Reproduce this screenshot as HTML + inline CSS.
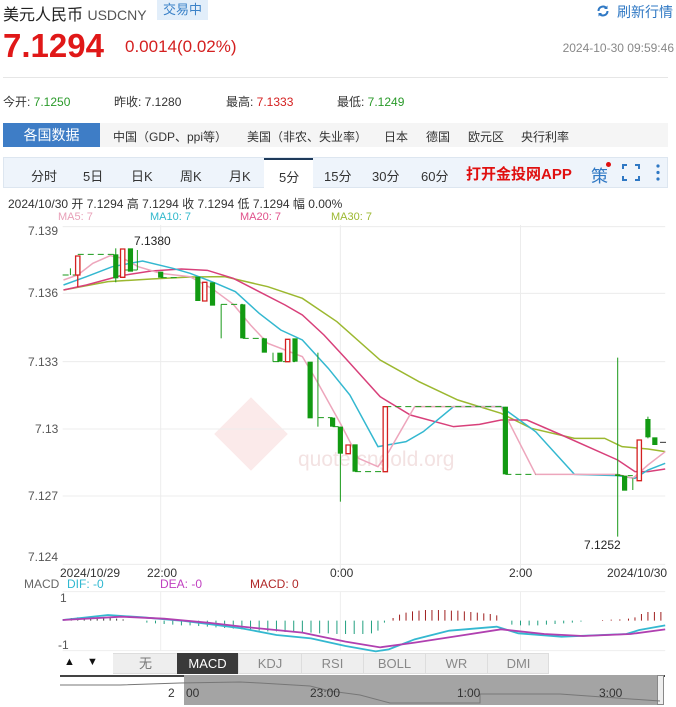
<!DOCTYPE html>
<html><head><meta charset="utf-8">
<style>
*{margin:0;padding:0;box-sizing:border-box}
body{width:676px;height:707px;background:#fff;position:relative;overflow:hidden;font-family:"Liberation Sans","Noto Sans CJK SC",sans-serif;color:#333}
.a{position:absolute;white-space:nowrap}
</style></head><body>
<div class="a" style="left:3px;top:1px;font-size:16px;color:#222">美元人民币 <span style="font-size:14px;color:#555">USDCNY</span></div>
<div class="a" style="left:157px;top:0;width:51px;height:20px;background:#e2eefa;color:#3b82c8;font-size:13px;text-align:center;line-height:20px">交易中</div>
<svg class="a" style="left:596px;top:4px" width="14" height="14" viewBox="0 0 14 14"><path d="M2.5 7a4.5 4.5 0 0 1 8-2.8M11.5 7a4.5 4.5 0 0 1-8 2.8" fill="none" stroke="#2f78c4" stroke-width="2"/><path d="M11.5 1.5v3.5H8zM2.5 12.5V9H6z" fill="#2f78c4"/></svg>
<div class="a" style="left:617px;top:2px;font-size:14px;color:#2f78c4">刷新行情</div>
<div class="a" style="left:3px;top:27px;font-size:33px;font-weight:bold;color:#e01818">7.1294</div>
<div class="a" style="left:125px;top:37px;font-size:17px;color:#d42020">0.0014(0.02%)</div>
<div class="a" style="right:2px;top:41px;font-size:12px;color:#888">2024-10-30 09:59:46</div>
<div class="a" style="left:3px;top:77px;width:665px;height:1px;background:#e6e6e6"></div>
<div class="a" style="left:3px;top:93px;font-size:12px;color:#333">今开: <span style="color:#2a9a2a">7.1250</span></div>
<div class="a" style="left:114px;top:93px;font-size:12px;color:#333">昨收: 7.1280</div>
<div class="a" style="left:226px;top:93px;font-size:12px;color:#333">最高: <span style="color:#d42020">7.1333</span></div>
<div class="a" style="left:337px;top:93px;font-size:12px;color:#333">最低: <span style="color:#2a9a2a">7.1249</span></div>
<div class="a" style="left:3px;top:123px;width:665px;height:24px;background:#f5f5f5"></div>
<div class="a" style="left:3px;top:123px;width:97px;height:24px;background:#3e7dc6;color:#fff;font-size:14px;text-align:center;line-height:24px">各国数据</div>
<div class="a" style="left:113px;top:128px;font-size:12px;color:#333">中国（GDP、ppi等）</div>
<div class="a" style="left:247px;top:128px;font-size:12px;color:#333">美国（非农、失业率）</div>
<div class="a" style="left:384px;top:128px;font-size:12px;color:#333">日本</div>
<div class="a" style="left:426px;top:128px;font-size:12px;color:#333">德国</div>
<div class="a" style="left:468px;top:128px;font-size:12px;color:#333">欧元区</div>
<div class="a" style="left:521px;top:128px;font-size:12px;color:#333">央行利率</div>
<div class="a" style="left:3px;top:157px;width:665px;height:31px;background:#eef4fb;border:1px solid #dde6f0"></div>
<div class="a" style="left:264px;top:158px;width:49px;height:30px;background:#fff;border-top:2px solid #1e3a5a"></div>
<div class="a" style="left:31px;top:166px;font-size:13px;color:#333;word-spacing:0">分时</div>
<div class="a" style="left:83px;top:166px;font-size:13px;color:#333">5日</div>
<div class="a" style="left:131px;top:166px;font-size:13px;color:#333">日K</div>
<div class="a" style="left:180px;top:166px;font-size:13px;color:#333">周K</div>
<div class="a" style="left:229px;top:166px;font-size:13px;color:#333">月K</div>
<div class="a" style="left:279px;top:167px;font-size:13px;color:#333">5分</div>
<div class="a" style="left:324px;top:166px;font-size:13px;color:#333">15分</div>
<div class="a" style="left:372px;top:166px;font-size:13px;color:#333">30分</div>
<div class="a" style="left:421px;top:166px;font-size:13px;color:#333">60分</div>
<div class="a" style="left:466px;top:163px;font-size:15px;font-weight:bold;color:#e01010">打开金投网APP</div>
<div class="a" style="left:591px;top:162px;font-size:17px;color:#2f78c4">策</div>
<div class="a" style="left:606px;top:162px;width:5px;height:5px;border-radius:50%;background:#e01010"></div>
<svg class="a" style="left:622px;top:164px" width="18" height="17" viewBox="0 0 18 17"><path d="M1 5V1h4M13 1h4v4M17 12v4h-4M5 16H1v-4" fill="none" stroke="#2f78c4" stroke-width="2"/></svg>
<svg class="a" style="left:655px;top:164px" width="6" height="17" viewBox="0 0 6 17"><circle cx="3" cy="2" r="1.6" fill="#2f78c4"/><circle cx="3" cy="8.5" r="1.6" fill="#2f78c4"/><circle cx="3" cy="15" r="1.6" fill="#2f78c4"/></svg>
<div class="a" style="left:8px;top:195px;font-size:12px;color:#333">2024/10/30 开 7.1294 高 7.1294 收 7.1294 低 7.1294 幅 0.00%</div>
<div class="a" style="left:58px;top:211px;font-size:11px;color:#e8a0b8">MA5: 7</div>
<div class="a" style="left:150px;top:211px;font-size:11px;color:#30b8cc">MA10: 7</div>
<div class="a" style="left:240px;top:211px;font-size:11px;color:#e0508a">MA20: 7</div>
<div class="a" style="left:331px;top:211px;font-size:11px;color:#9cb830">MA30: 7</div>
<div class="a" style="left:298px;top:448px;font-size:21px;color:#f3e2e2">quote.cngold.org</div>
<div class="a" style="left:225px;top:408px;width:52px;height:52px;transform:rotate(45deg);background:#fbeaea"></div>
<svg class="a" style="left:0;top:225px" width="676" height="345" viewBox="0 0 1565 1035" preserveAspectRatio="none">
<g stroke="#ececec" vector-effect="non-scaling-stroke" stroke-width="1">
<line x1="145" y1="5" x2="1540" y2="5" vector-effect="non-scaling-stroke"/><line x1="145" y1="205" x2="1540" y2="205" vector-effect="non-scaling-stroke"/><line x1="145" y1="410" x2="1540" y2="410" vector-effect="non-scaling-stroke"/><line x1="145" y1="612" x2="1540" y2="612" vector-effect="non-scaling-stroke"/><line x1="145" y1="813" x2="1540" y2="813" vector-effect="non-scaling-stroke"/><line x1="145" y1="1018" x2="1540" y2="1018" vector-effect="non-scaling-stroke"/>
<line x1="372" y1="0" x2="372" y2="1035" vector-effect="non-scaling-stroke"/><line x1="788" y1="0" x2="788" y2="1035" vector-effect="non-scaling-stroke"/><line x1="1205" y1="0" x2="1205" y2="1035" vector-effect="non-scaling-stroke"/>
</g>
<g fill="none" stroke-width="1.5">
<polyline vector-effect="non-scaling-stroke" stroke="#9cb830" points="147,195 250,170 350,162 440,156 520,155 620,185 700,220 780,290 880,405 970,470 1060,525 1160,565 1230,610 1330,640 1400,640 1440,665 1500,672 1540,680"/>
<polyline vector-effect="non-scaling-stroke" stroke="#d8407a" points="147,195 200,180 280,152 350,138 420,132 480,136 540,160 600,200 660,240 700,270 750,330 800,400 880,515 950,570 1050,605 1110,598 1160,585 1220,585 1300,630 1430,705 1470,740 1500,740 1540,732"/>
<polyline vector-effect="non-scaling-stroke" stroke="#34b8d0" points="147,180 200,155 260,125 330,108 400,130 440,145 500,175 545,200 600,265 650,315 700,345 760,430 810,510 875,665 940,650 980,620 1050,545 1160,545 1240,620 1330,748 1430,752 1470,760 1500,735 1540,715"/>
<polyline vector-effect="non-scaling-stroke" stroke="#eda6bc" points="147,165 180,150 215,115 255,92 285,100 320,125 372,145 440,155 490,190 540,238 580,300 620,355 700,395 730,460 790,600 830,700 875,725 900,680 960,545 1160,545 1240,748 1430,748 1465,760 1500,720 1540,680"/>
</g>
<g stroke="#1a9a1a" stroke-dasharray="6,4" vector-effect="non-scaling-stroke">
<line x1="145" y1="150" x2="180" y2="150" vector-effect="non-scaling-stroke"/><line x1="180" y1="88" x2="268" y2="88" vector-effect="non-scaling-stroke"/><line x1="285" y1="135" x2="318" y2="135" vector-effect="non-scaling-stroke"/><line x1="372" y1="158" x2="410" y2="158" vector-effect="non-scaling-stroke"/><line x1="512" y1="238" x2="562" y2="238" vector-effect="non-scaling-stroke"/><line x1="562" y1="340" x2="612" y2="340" vector-effect="non-scaling-stroke"/><line x1="632" y1="410" x2="683" y2="410" vector-effect="non-scaling-stroke"/><line x1="736" y1="578" x2="770" y2="578" vector-effect="non-scaling-stroke"/><line x1="770" y1="605" x2="788" y2="605" vector-effect="non-scaling-stroke"/><line x1="822" y1="740" x2="892" y2="740" vector-effect="non-scaling-stroke"/><line x1="892" y1="545" x2="1170" y2="545" vector-effect="non-scaling-stroke"/><line x1="1170" y1="748" x2="1240" y2="748" vector-effect="non-scaling-stroke"/><line x1="1430" y1="752" x2="1465" y2="752" vector-effect="non-scaling-stroke"/><line x1="1528" y1="652" x2="1545" y2="652" stroke="#333" vector-effect="non-scaling-stroke"/>
</g>
<g stroke="#1a9a1a" vector-effect="non-scaling-stroke">
<line x1="163" y1="130" x2="163" y2="150" vector-effect="non-scaling-stroke"/><line x1="268" y1="70" x2="268" y2="172" vector-effect="non-scaling-stroke"/><line x1="318" y1="75" x2="318" y2="135" vector-effect="non-scaling-stroke"/><line x1="512" y1="238" x2="512" y2="340" vector-effect="non-scaling-stroke"/><line x1="632" y1="383" x2="632" y2="410" vector-effect="non-scaling-stroke"/><line x1="736" y1="383" x2="736" y2="605" vector-effect="non-scaling-stroke"/><line x1="788" y1="605" x2="788" y2="830" vector-effect="non-scaling-stroke"/><line x1="1430" y1="398" x2="1430" y2="935" vector-effect="non-scaling-stroke"/><line x1="1465" y1="760" x2="1465" y2="795" vector-effect="non-scaling-stroke"/><line x1="1500" y1="575" x2="1500" y2="640" vector-effect="non-scaling-stroke"/>
</g>
<g fill="#129a12">
<rect x="262" y="88" width="12" height="72"/><rect x="296" y="70" width="12" height="70"/><rect x="366" y="140" width="12" height="18"/><rect x="452" y="155" width="12" height="73"/><rect x="486" y="172" width="12" height="70"/><rect x="556" y="238" width="12" height="102"/><rect x="606" y="340" width="12" height="43"/><rect x="642" y="383" width="12" height="27"/><rect x="677" y="340" width="12" height="70"/><rect x="712" y="410" width="12" height="170"/><rect x="764" y="578" width="12" height="27"/><rect x="782" y="605" width="12" height="81"/><rect x="816" y="658" width="12" height="82"/><rect x="1164" y="545" width="12" height="203"/><rect x="1424" y="748" width="12" height="5"/><rect x="1440" y="752" width="12" height="45"/><rect x="1494" y="582" width="12" height="55"/><rect x="1510" y="637" width="12" height="23"/>
</g>
<g fill="#fff" stroke="#d42020" stroke-width="1.3">
<line x1="180" y1="93" x2="180" y2="186" vector-effect="non-scaling-stroke"/>
<rect vector-effect="non-scaling-stroke" x="175" y="93" width="10" height="57"/><rect vector-effect="non-scaling-stroke" x="279" y="72" width="10" height="85"/><rect vector-effect="non-scaling-stroke" x="469" y="172" width="10" height="56"/><rect vector-effect="non-scaling-stroke" x="661" y="343" width="10" height="67"/><rect vector-effect="non-scaling-stroke" x="801" y="660" width="10" height="26"/><rect vector-effect="non-scaling-stroke" x="887" y="545" width="10" height="195"/><rect vector-effect="non-scaling-stroke" x="1475" y="645" width="10" height="122"/>
</g>
</svg>
<div class="a" style="left:28px;top:224px;font-size:12px;color:#555">7.139</div>
<div class="a" style="left:28px;top:286px;font-size:12px;color:#555">7.136</div>
<div class="a" style="left:28px;top:355px;font-size:12px;color:#555">7.133</div>
<div class="a" style="left:35px;top:422px;font-size:12px;color:#555">7.13</div>
<div class="a" style="left:28px;top:489px;font-size:12px;color:#555">7.127</div>
<div class="a" style="left:28px;top:550px;font-size:12px;color:#555">7.124</div>
<div class="a" style="left:134px;top:234px;font-size:12px;color:#222">7.1380</div>
<div class="a" style="left:584px;top:538px;font-size:12px;color:#222">7.1252</div>
<div class="a" style="left:60px;top:566px;font-size:12px;color:#333">2024/10/29</div>
<div class="a" style="left:147px;top:566px;font-size:12px;color:#333">22:00</div>
<div class="a" style="left:330px;top:566px;font-size:12px;color:#333">0:00</div>
<div class="a" style="left:509px;top:566px;font-size:12px;color:#333">2:00</div>
<div class="a" style="left:607px;top:566px;font-size:12px;color:#333">2024/10/30</div>
<div class="a" style="left:24px;top:577px;font-size:12px;color:#666">MACD</div>
<div class="a" style="left:67px;top:577px;font-size:12px;color:#30b8d0">DIF: -0</div>
<div class="a" style="left:160px;top:577px;font-size:12px;color:#c040c0">DEA: -0</div>
<div class="a" style="left:250px;top:577px;font-size:12px;color:#b02828">MACD: 0</div>
<div class="a" style="left:60px;top:591px;font-size:12px;color:#555">1</div>
<div class="a" style="left:58px;top:638px;font-size:12px;color:#555">-1</div>
<svg class="a" style="left:0;top:560px" width="676" height="147" viewBox="0 0 1565 441" preserveAspectRatio="none">
<line x1="145" y1="95" x2="1540" y2="95" stroke="#eee" vector-effect="non-scaling-stroke"/>
<line x1="145" y1="272" x2="1540" y2="272" stroke="#eee" vector-effect="non-scaling-stroke"/>
<line x1="372" y1="95" x2="372" y2="272" stroke="#eee" vector-effect="non-scaling-stroke"/><line x1="788" y1="95" x2="788" y2="272" stroke="#eee" vector-effect="non-scaling-stroke"/><line x1="1205" y1="95" x2="1205" y2="272" stroke="#eee" vector-effect="non-scaling-stroke"/>
<g stroke="#3a3a3a" vector-effect="non-scaling-stroke">
<path vector-effect="non-scaling-stroke" d="M165 174v8M180 172v10M195 172v10M210 172v10M225 172v10M240 172v10M255 174v8M270 176v6M285 178v4"/>
</g>
<g stroke="#22a080">
<path vector-effect="non-scaling-stroke" d="M340 182v6M360 182v8M380 182v10M400 182v12M420 182v14M440 182v14M460 182v16M480 182v18M500 182v20M520 182v22M540 182v24M560 182v26M580 182v28M600 182v30M620 182v32M640 182v32M660 182v34M680 182v34M700 182v36M720 182v36M740 182v38M760 182v38M780 182v40M800 182v40M820 182v40M840 182v40M860 182v38M875 182v30M890 182v6M1185 182v12M1205 182v14M1225 182v14M1245 182v14M1265 182v12M1285 182v10M1305 182v8M1325 182v6M1345 182v3"/>
</g>
<g stroke="#a02020">
<path vector-effect="non-scaling-stroke" d="M910 182v-8M925 182v-18M940 182v-24M955 182v-28M970 182v-30M985 182v-32M1000 182v-32M1015 182v-32M1030 182v-32M1045 182v-30M1060 182v-30M1075 182v-28M1090 182v-26M1105 182v-24M1120 182v-22M1135 182v-20M1150 182v-16M1395 182v-2M1415 182v-3M1435 182v-4M1455 182v-6M1470 182v-10M1485 182v-20M1500 182v-26M1515 182v-26M1530 182v-26"/>
</g>
<polyline fill="none" stroke="#34b8d0" stroke-width="1.8" vector-effect="non-scaling-stroke" points="145,180 250,165 330,172 420,182 500,195 560,205 640,225 720,235 800,258 870,274 900,268 960,238 1040,212 1150,200 1200,220 1300,230 1450,222 1480,210 1540,196"/>
<polyline fill="none" stroke="#b040b0" stroke-width="1.8" vector-effect="non-scaling-stroke" points="145,180 280,170 380,176 480,188 560,200 700,218 800,245 880,262 960,248 1060,228 1160,208 1260,222 1350,228 1460,222 1540,208"/>
</svg>
<div class="a" style="left:60px;top:653px;width:489px;height:21px;background:#eee;border:1px solid #ddd"></div>
<div class="a" style="left:60px;top:653px;width:53px;height:21px;background:#fff"></div>
<div class="a" style="left:64px;top:656px;font-size:11px;color:#111">▲</div>
<div class="a" style="left:87px;top:656px;font-size:11px;color:#111">▼</div>
<div class="a" style="left:114px;top:654px;width:63px;height:20px;text-align:center;font-size:13px;line-height:19px;color:#777">无</div>
<div class="a" style="left:177px;top:653px;width:61px;height:21px;background:#3a3a3a;color:#fff;text-align:center;font-size:13px;line-height:21px">MACD</div>
<div class="a" style="left:238px;top:654px;width:63px;height:20px;text-align:center;font-size:13px;line-height:19px;color:#888;border-left:1px solid #ddd">KDJ</div>
<div class="a" style="left:301px;top:654px;width:62px;height:20px;text-align:center;font-size:13px;line-height:19px;color:#888;border-left:1px solid #ddd">RSI</div>
<div class="a" style="left:363px;top:654px;width:62px;height:20px;text-align:center;font-size:13px;line-height:19px;color:#888;border-left:1px solid #ddd">BOLL</div>
<div class="a" style="left:425px;top:654px;width:62px;height:20px;text-align:center;font-size:13px;line-height:19px;color:#888;border-left:1px solid #ddd">WR</div>
<div class="a" style="left:487px;top:654px;width:62px;height:20px;text-align:center;font-size:13px;line-height:19px;color:#888;border-left:1px solid #ddd">DMI</div>
<div class="a" style="left:60px;top:675px;width:605px;height:30px;background:#fff;border-top:2px solid #444"></div>
<div class="a" style="left:184px;top:675px;width:475px;height:30px;background:#a4a4a4"></div>
<div class="a" style="left:657px;top:675px;width:7px;height:30px;background:#eee;border:1px solid #888"></div>
<svg class="a" style="left:60px;top:677px" width="605" height="28" viewBox="0 0 605 28"><polyline fill="none" stroke="#777" points="0,8 60,8 120,6 180,5 200,6 250,9 270,14 300,18 330,26 420,26 420,17 460,17 500,17 600,24"/></svg>
<div class="a" style="left:168px;top:686px;font-size:12px;color:#333">2</div>
<div class="a" style="left:186px;top:686px;font-size:12px;color:#333">00</div>
<div class="a" style="left:310px;top:686px;font-size:12px;color:#333">23:00</div>
<div class="a" style="left:457px;top:686px;font-size:12px;color:#333">1:00</div>
<div class="a" style="left:599px;top:686px;font-size:12px;color:#333">3:00</div>
</body></html>
